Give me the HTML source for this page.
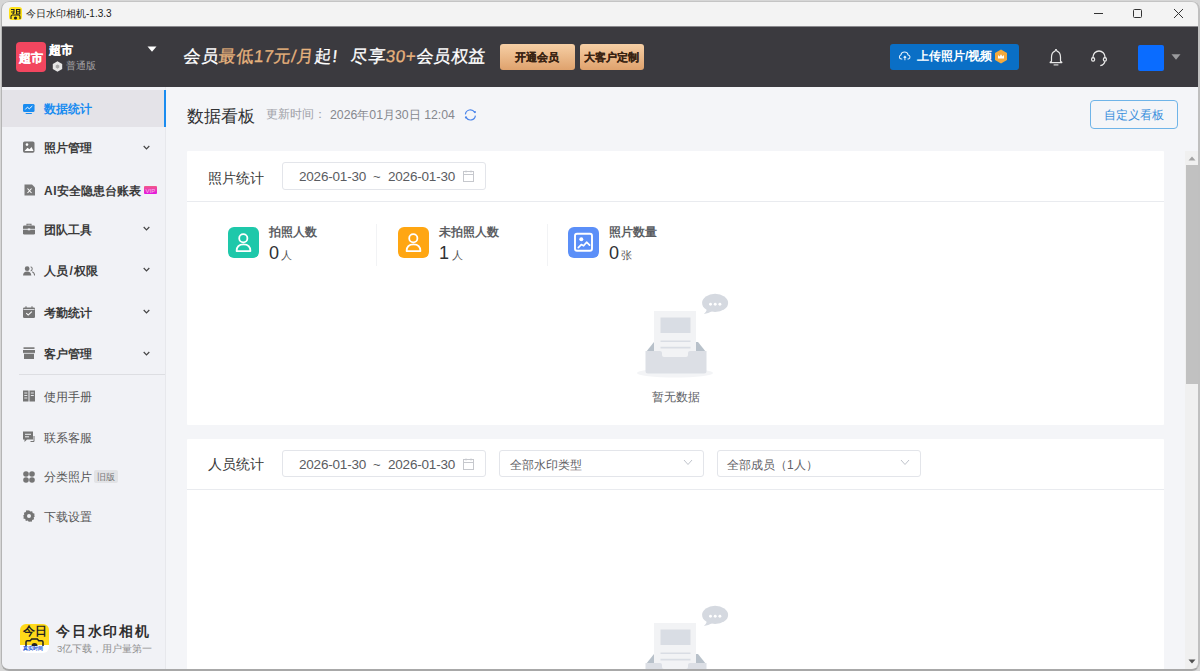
<!DOCTYPE html>
<html><head><meta charset="utf-8">
<style>
*{box-sizing:border-box;margin:0;padding:0}
html,body{width:1200px;height:671px;overflow:hidden;background:#f4f5f8;font-family:"Liberation Sans",sans-serif;position:relative}
.a{position:absolute}
.t{position:absolute;white-space:nowrap;line-height:1}
.frame{position:absolute;left:1px;top:1px;width:1199px;height:670px;border-style:solid;border-color:#c4c4c4 #c0c0c0 #a8a8a8 #b5b5b5;border-width:1px 2px 2px 1px;border-radius:8px;box-shadow:0 0 0 40px #d6d6d6;pointer-events:none;z-index:50}
.nav{position:absolute;left:44px;font-size:12px;font-weight:bold;color:#3a3a3a;line-height:1;white-space:nowrap}
.nav2{position:absolute;left:44px;font-size:12px;color:#555;line-height:1;white-space:nowrap}
.chev{position:absolute;left:143px;width:7px;height:5px}
.ico{position:absolute;left:23px;width:12px;height:12px}
.box{position:absolute;border:1px solid #e3e5ea;border-radius:3px;background:#fff}
</style></head><body>

<!-- title bar -->
<div class="a" style="left:0;top:0;width:1200px;height:26px;background:#f3f3f3"></div>
<div class="a" style="left:9px;top:7px;width:13px;height:13px;background:#ffe21a;border-radius:3px"></div>
<svg class="a" style="left:9px;top:7px" width="13" height="13" viewBox="0 0 13 13"><path d="M2 2.5h3v2.5H2M5 2.5v3.5L3.5 7M7.5 2.5h3.3v4.5H7.5zM7.5 4.8h3.3" stroke="#222" stroke-width="1.1" fill="none"/><path d="M2 12V9.5q0-1.5 1.5-1.5h6q1.5 0 1.5 1.5V12" stroke="#222" stroke-width="1.1" fill="none"/><circle cx="6.5" cy="11" r="1.6" fill="#222"/></svg>
<div class="t" style="left:26px;top:9px;font-size:10px;color:#1b1b1b">今日水印相机-1.3.3</div>
<div class="a" style="left:1094px;top:13px;width:9px;height:1px;background:#333"></div>
<div class="a" style="left:1133px;top:9px;width:9px;height:9px;border:1px solid #333;border-radius:1.5px"></div>
<svg class="a" style="left:1173px;top:8px" width="11" height="11" viewBox="0 0 11 11"><path d="M1 1L10 10M10 1L1 10" stroke="#333" stroke-width="1"/></svg>

<!-- header -->
<div class="a" style="left:0;top:26px;width:1200px;height:61px;background:#3b3a3f"></div>
<div class="a" style="left:0;top:26px;width:1200px;height:1px;background:#8a898d"></div>
<div class="a" style="left:16px;top:42px;width:30px;height:30px;background:#f2465f;border-radius:4px"></div>
<div class="t" style="left:19px;top:51.5px;font-size:12px;font-weight:bold;color:#fff;-webkit-text-stroke:0.3px #fff">超市</div>
<div class="t" style="left:49px;top:44px;font-size:12px;font-weight:bold;color:#fff;-webkit-text-stroke:0.3px #fff">超市</div>
<svg class="a" style="left:52px;top:61px" width="11" height="11" viewBox="0 0 11 11"><path d="M5.5 0.3L10.2 3v5L5.5 10.7 0.8 8V3z" fill="#e6e6e6"/><path d="M5.5 3.4l1.8 1.1v2.1l-1.8 1.1-1.8-1.1V4.5z" fill="#a8a8a8"/></svg>
<div class="t" style="left:66px;top:61px;font-size:10px;color:#a5a5a8">普通版</div>
<svg class="a" style="left:147px;top:46px" width="10" height="6" viewBox="0 0 10 6"><path d="M0.5 0.5h9L5 5.8z" fill="#fff"/></svg>

<div class="t" style="left:184px;top:48px;font-size:17px;color:#fff;letter-spacing:0.5px;transform:skewX(-6deg);-webkit-text-stroke:0.3px currentColor">会员<span style="color:#e6b27d">最低17元/月</span>起<span style="margin-left:1px;margin-right:13px">!</span>尽享<span style="color:#e6b27d">30+</span>会员权益</div>

<div class="a" style="left:500px;top:44px;width:75px;height:26px;border-radius:3px;background:linear-gradient(#f6cfa5,#dfa26d)"></div>
<div class="t" style="left:515px;top:52px;font-size:11px;font-weight:bold;color:#3a2312;-webkit-text-stroke:0.2px #3a2312">开通会员</div>
<div class="a" style="left:580px;top:44px;width:64px;height:26px;border-radius:3px;background:linear-gradient(#f6cfa5,#dfa26d)"></div>
<div class="t" style="left:584px;top:52px;font-size:11px;font-weight:bold;color:#3a2312;-webkit-text-stroke:0.2px #3a2312">大客户定制</div>

<div class="a" style="left:890px;top:44px;width:129px;height:26px;border-radius:3px;background:#0a6fc6"></div>
<svg class="a" style="left:898px;top:50px" width="14" height="11" viewBox="0 0 14 11"><path d="M3.9 9H3.3A2.1 2.1 0 0 1 2.9 4.9 3.7 3.7 0 0 1 10.1 4.9 2.1 2.1 0 0 1 10.5 9H9.9" stroke="#e6f0fa" stroke-width="1.05" fill="none" stroke-linecap="round"/><path d="M6.9 10.2V6.4M5.6 7.6l1.3-1.3 1.3 1.3" stroke="#e6f0fa" stroke-width="1.05" fill="none"/></svg>
<div class="t" style="left:917px;top:50px;font-size:12px;font-weight:bold;color:#fff">上传照片/视频</div>
<svg class="a" style="left:994px;top:49px" width="14" height="15" viewBox="0 0 14 15"><path d="M7 0.5L13 4v7l-6 3.5L1 11V4z" fill="#f4a93c"/><path d="M4 9.5V6l1.6 1.4L7 5.3l1.4 2.1L10 6v3.5z" fill="#fff"/></svg>

<svg class="a" style="left:1048px;top:48px" width="16" height="19" viewBox="0 0 16 19"><path d="M7.6 1.6Q8.6 1.6 9 3.1Q12.4 4.3 12.5 9V13.2L13.8 14.2Q14 14.7 13.4 14.7H2.6Q2 14.7 2.2 14.2L3.5 13.2V9Q3.6 4.3 7 3.1Q7.4 1.6 8.4 1.6Z" stroke="#e8e8e8" stroke-width="1.2" fill="none" stroke-linejoin="round"/><path d="M5.6 16.9h4.8" stroke="#d8d8d8" stroke-width="1.2"/></svg>
<svg class="a" style="left:1090px;top:49px" width="18" height="18" viewBox="0 0 18 18"><path d="M3 9.5V8a6 6 0 0 1 12 0v1.5" stroke="#e8e8e8" stroke-width="1.3" fill="none"/><rect x="1.6" y="8.6" width="3" height="3.6" rx="1.4" stroke="#e8e8e8" stroke-width="1.2" fill="none"/><rect x="13.4" y="8.6" width="3" height="3.6" rx="1.4" stroke="#e8e8e8" stroke-width="1.2" fill="none"/><path d="M14.9 12.4q-0.6 3.4-4.6 4.3" stroke="#e8e8e8" stroke-width="1.3" fill="none"/></svg>
<div class="a" style="left:1138px;top:45px;width:26px;height:26px;border-radius:2px;background:#0a6cff"></div>
<svg class="a" style="left:1171px;top:54px" width="10" height="6" viewBox="0 0 10 6"><path d="M0.5 0.3h9L5 5.8z" fill="#9b9b9e"/></svg>

<!-- sidebar -->
<div class="a" style="left:0;top:87px;width:165px;height:584px;background:#f1f2f6"></div>
<div class="a" style="left:165px;top:87px;width:1px;height:584px;background:#e7e8ec"></div>
<div class="a" style="left:2px;top:90px;width:162px;height:37px;background:#e4e3e8"></div>
<div class="a" style="left:164px;top:90px;width:2px;height:37px;background:#1a8cf0"></div>

<svg class="ico" style="top:103px" width="13" height="12" viewBox="0 0 13 12"><rect x="0" y="0.5" width="12.5" height="8.8" rx="1.5" fill="#1a8cf0"/><path d="M2.5 6.5L4.8 4l2 1.8 3.3-3" stroke="#fff" stroke-width="1" fill="none"/><path d="M2.5 10.3h7.5l-0.8 1H3.3z" fill="#1a8cf0"/></svg>
<div class="nav" style="top:103px;color:#1a8cf0">数据统计</div>

<svg class="ico" style="top:141px" width="12" height="12" viewBox="0 0 12 12"><rect x="0" y="0.5" width="11.5" height="11.2" rx="1.6" fill="#757575"/><circle cx="4" cy="3.6" r="1.3" fill="#fff"/><path d="M1.5 10l3-3.3 2 1.5 2-2.2 2 4z" fill="#fff"/></svg>
<div class="nav" style="top:142px">照片管理</div>
<svg class="chev" style="top:145px" viewBox="0 0 7 5"><path d="M0.7 1l2.8 2.8L6.3 1" stroke="#444" stroke-width="1.2" fill="none"/></svg>

<svg class="ico" style="top:184px;left:24px" width="11" height="12" viewBox="0 0 11 12"><path d="M0 0.5h7.5l3 3v8H0z" fill="#7a7a7a"/><path d="M3 4.5l4 4.5M7 4.5l-4 4.5" stroke="#fff" stroke-width="1.1"/></svg>
<div class="nav" style="top:185px"><span style="letter-spacing:0.7px">AI</span>安全隐患台账表</div>
<div class="a" style="left:144px;top:186px;width:13px;height:8px;background:linear-gradient(#f25a88,#e316e4);border-radius:1px"></div>
<div class="t" style="left:145.5px;top:187.5px;font-size:6px;color:#f7b8ee">VIP</div>

<svg class="ico" style="top:223px" width="12" height="12" viewBox="0 0 12 12"><path d="M4 2.5V1.2h4v1.3" stroke="#757575" stroke-width="1.1" fill="none"/><rect x="0" y="2.5" width="12" height="9" rx="1.3" fill="#757575"/><path d="M0 6.3h12" stroke="#f1f2f6" stroke-width="0.9"/><rect x="4.8" y="5.5" width="2.4" height="1.8" fill="#f1f2f6"/></svg>
<div class="nav" style="top:224px">团队工具</div>
<svg class="chev" style="top:226px" viewBox="0 0 7 5"><path d="M0.7 1l2.8 2.8L6.3 1" stroke="#444" stroke-width="1.2" fill="none"/></svg>

<svg class="ico" style="top:265px" width="13" height="11" viewBox="0 0 13 11"><circle cx="4.5" cy="3" r="2.6" fill="#757575"/><path d="M0 10.5q0.3-4.5 4.5-4.5t4.5 4.5z" fill="#757575"/><path d="M8.3 0.8a2.4 2.4 0 0 1 0 4.6M10 6.3q2.5 1 2.6 4" stroke="#757575" stroke-width="1.1" fill="none"/></svg>
<div class="nav" style="top:265px">人员<span style="margin:0 1.5px">/</span>权限</div>
<svg class="chev" style="top:267px" viewBox="0 0 7 5"><path d="M0.7 1l2.8 2.8L6.3 1" stroke="#444" stroke-width="1.2" fill="none"/></svg>

<svg class="ico" style="top:306px" width="12" height="12" viewBox="0 0 12 12"><path d="M3 0.3v2.2M9 0.3v2.2" stroke="#757575" stroke-width="1.1"/><rect x="0" y="1.5" width="12" height="10.5" rx="1.3" fill="#757575"/><path d="M0.5 3.5h11" stroke="#f1f2f6" stroke-width="0.8"/><path d="M3.3 7.2l1.9 1.9 3.6-3.5" stroke="#fff" stroke-width="1.1" fill="none"/></svg>
<div class="nav" style="top:307px">考勤统计</div>
<svg class="chev" style="top:309px" viewBox="0 0 7 5"><path d="M0.7 1l2.8 2.8L6.3 1" stroke="#444" stroke-width="1.2" fill="none"/></svg>

<svg class="ico" style="top:347px" width="12" height="12" viewBox="0 0 12 12"><rect x="0.5" y="0.3" width="11" height="1.6" fill="#757575"/><path d="M0 3h12v3.2H0z" fill="#757575"/><path d="M1 6.5h10V12H1z" fill="#757575"/><path d="M0 6.3h12" stroke="#f1f2f6" stroke-width="0.6"/></svg>
<div class="nav" style="top:348px">客户管理</div>
<svg class="chev" style="top:351px" viewBox="0 0 7 5"><path d="M0.7 1l2.8 2.8L6.3 1" stroke="#444" stroke-width="1.2" fill="none"/></svg>

<div class="a" style="left:19px;top:374px;width:146px;height:1px;background:#dddee2"></div>

<svg class="ico" style="top:390px" width="12" height="12" viewBox="0 0 12 12"><path d="M0 0.5h5.5v11H0zM6.5 0.5H12v11H6.5z" fill="#757575"/><path d="M1.3 3h3M1.3 5.5h3M1.3 8h3M7.8 3h3M7.8 5.5h3" stroke="#f1f2f6" stroke-width="0.9"/></svg>
<div class="nav2" style="top:391px">使用手册</div>
<svg class="ico" style="top:431px" width="12" height="12" viewBox="0 0 12 12"><path d="M0 0.5h10v8H4l-2.5 2.5V8.5H0z" fill="#757575"/><path d="M2 3.3h6M2 5.8h4" stroke="#f1f2f6" stroke-width="1"/><path d="M11 5v5.5H7.5" stroke="#757575" stroke-width="1" fill="none"/></svg>
<div class="nav2" style="top:432px">联系客服</div>
<svg class="ico" style="top:471px" width="12" height="12" viewBox="0 0 12 12"><circle cx="3" cy="3" r="2.8" fill="#757575"/><circle cx="9" cy="3" r="2.8" fill="#757575"/><circle cx="3" cy="9" r="2.8" fill="#757575"/><circle cx="9" cy="9" r="2.8" fill="#757575"/></svg>
<div class="nav2" style="top:471px">分类照片</div>
<div class="a" style="left:94px;top:470px;width:24px;height:13px;background:#e2e3e6;border-radius:2px"></div>
<div class="t" style="left:97px;top:473px;font-size:8.5px;color:#777">旧版</div>
<svg class="ico" style="top:510px" width="12" height="12" viewBox="0 0 12 12"><path d="M6 0.2l1.3 1.4 1.9-0.4 0.5 1.9 1.9 0.6-0.4 1.9L12 6l-1.3 1.4 0.4 1.9-1.9 0.6-0.5 1.9-1.9-0.4L6 12l-1.3-1.4-1.9 0.4-0.5-1.9-1.9-0.6 0.4-1.9L0 6l1.3-1.4-0.4-1.9 1.9-0.6 0.5-1.9 1.9 0.4z" fill="#757575"/><circle cx="6" cy="6" r="2" fill="#f1f2f6"/></svg>
<div class="nav2" style="top:511px">下载设置</div>

<!-- bottom logo -->
<div class="a" style="left:20px;top:624px;width:29px;height:29px;border-radius:6px;background:linear-gradient(#ffd91a 0,#ffd91a 72%,#fff 72%)"></div>
<div class="t" style="left:23px;top:626px;font-size:11.5px;font-weight:bold;color:#222">今日</div>
<svg class="a" style="left:25px;top:638px" width="19" height="8" viewBox="0 0 19 8"><path d="M1 8V4q0-1.3 1.3-1.3h3l1.4-1.8h5.6l1.4 1.8h3Q18 2.7 18 4v4" stroke="#222" stroke-width="1.5" fill="none"/><path d="M6.5 8a3 3 0 0 1 6 0z" fill="#222"/></svg>
<div class="t" style="left:23px;top:646px;font-size:5px;font-weight:bold;color:#1e58d6">真实时间</div>
<div class="t" style="left:56px;top:625px;font-size:13.5px;font-weight:bold;color:#2e2e2e;letter-spacing:1.8px">今日水印相机</div>
<div class="t" style="left:57px;top:644px;font-size:9.5px;color:#909090">3亿下载，用户量第一</div>

<!-- main -->
<div class="t" style="left:187px;top:108px;font-size:17px;color:#303133">数据看板</div>
<div class="t" style="left:266px;top:109px;font-size:11.5px;color:#a0a2a8">更新时间：</div>
<div class="t" style="left:330px;top:109px;font-size:12.3px;color:#86888e">2026年01月30日 12:04</div>
<svg class="a" style="left:464px;top:109px" width="13" height="12" viewBox="0 0 13 12"><path d="M11.4 6.6A5 5 0 0 1 2.2 8.6M1.4 5.4A5 5 0 0 1 10.6 3.2" stroke="#4d86ea" stroke-width="1.2" fill="none"/><circle cx="10.9" cy="3.1" r="1.1" fill="#4d86ea"/><circle cx="2" cy="8.4" r="1.1" fill="#4d86ea"/></svg>
<div class="a" style="left:1090px;top:100px;width:88px;height:29px;border:1px solid #6fb4e8;border-radius:4px"></div>
<div class="t" style="left:1104px;top:109px;font-size:12.2px;color:#3a8fdc">自定义看板</div>

<!-- card 1 -->
<div class="a" style="left:187px;top:151px;width:977px;height:274px;background:#fff;border-radius:1px"></div>
<div class="a" style="left:187px;top:201px;width:977px;height:1px;background:#e9ebef"></div>
<div class="t" style="left:208px;top:172px;font-size:13.5px;color:#3a3a3a">照片统计</div>
<div class="box" style="left:282px;top:162px;width:204px;height:28px"></div>
<div class="t" style="left:299px;top:170px;font-size:13.5px;color:#5a5c61;letter-spacing:-0.2px">2026-01-30</div>
<div class="t" style="left:373px;top:170px;font-size:13px;color:#5a5c61">~</div>
<div class="t" style="left:388px;top:170px;font-size:13.5px;color:#5a5c61;letter-spacing:-0.2px">2026-01-30</div>
<svg class="a" style="left:462px;top:170px" width="13" height="12" viewBox="0 0 13 12"><rect x="1.5" y="1.5" width="10" height="10" stroke="#c6c8cd" stroke-width="1" fill="none"/><path d="M1.5 4.5h10M4 0.5v2M9 0.5v2" stroke="#c6c8cd" stroke-width="1"/></svg>

<div class="a" style="left:228px;top:227px;width:31px;height:31px;border-radius:6px;background:#1ec8aa"></div>
<svg class="a" style="left:228px;top:227px" width="31" height="31" viewBox="0 0 31 31"><circle cx="15.3" cy="11.2" r="4.1" stroke="#fff" stroke-width="1.8" fill="none"/><path d="M8.6 24.1C8.6 19.6 11.5 17.4 15.5 17.4S22.4 19.6 22.4 24.1Z" stroke="#fff" stroke-width="1.8" fill="none" stroke-linejoin="round"/></svg>
<div class="t" style="left:269px;top:226px;font-size:12px;font-weight:bold;color:#5b5d62">拍照人数</div>
<div class="t" style="left:269px;top:244px;font-size:18px;color:#303133">0<span style="font-size:11px;color:#555;margin-left:2px">人</span></div>
<div class="a" style="left:376px;top:224px;width:1px;height:42px;background:#f2f3f5"></div>

<div class="a" style="left:398px;top:227px;width:31px;height:31px;border-radius:6px;background:#ffa612"></div>
<svg class="a" style="left:398px;top:227px" width="31" height="31" viewBox="0 0 31 31"><circle cx="15.3" cy="11.2" r="4.1" stroke="#fff" stroke-width="1.8" fill="none"/><path d="M8.6 24.1C8.6 19.6 11.5 17.4 15.5 17.4S22.4 19.6 22.4 24.1Z" stroke="#fff" stroke-width="1.8" fill="none" stroke-linejoin="round"/></svg>
<div class="t" style="left:439px;top:226px;font-size:12px;font-weight:bold;color:#5b5d62">未拍照人数</div>
<div class="t" style="left:439px;top:244px;font-size:18px;color:#303133">1<span style="font-size:11px;color:#555;margin-left:3px">人</span></div>
<div class="a" style="left:547px;top:224px;width:1px;height:42px;background:#f2f3f5"></div>

<div class="a" style="left:568px;top:227px;width:31px;height:31px;border-radius:6px;background:#5b8ff8"></div>
<svg class="a" style="left:568px;top:227px" width="31" height="31" viewBox="0 0 31 31"><rect x="7" y="6.8" width="17" height="17" rx="2" stroke="#fff" stroke-width="1.9" fill="none"/><circle cx="13.3" cy="12.3" r="2" fill="#fff"/><path d="M10.3 20.6L13.3 17.6 15.6 18.8 18.6 15.2 21.6 18.2" stroke="#fff" stroke-width="1.7" fill="none" stroke-linecap="round" stroke-linejoin="round"/></svg>
<div class="t" style="left:609px;top:226px;font-size:12px;font-weight:bold;color:#5b5d62">照片数量</div>
<div class="t" style="left:609px;top:244px;font-size:18px;color:#303133">0<span style="font-size:11px;color:#555;margin-left:2px">张</span></div>

<!-- empty 1 -->
<svg class="a" style="left:630px;top:290px" width="110" height="92" viewBox="0 0 110 92">
<ellipse cx="45" cy="83" rx="38" ry="4.5" fill="#f3f4f6"/>
<path d="M16 62l8-10h44l8 10z" fill="#b8c1ca"/>
<rect x="24" y="21" width="42" height="46" fill="#f2f3f5"/>
<rect x="30.5" y="27.5" width="30" height="15.5" fill="#d9dde4"/>
<path d="M30.5 51.2h30M30.5 57.6h30" stroke="#d9dde4" stroke-width="1.6"/>
<path d="M15.5 61h14.5q2 0 2 2v2q0 2 2 2h22q2 0 2-2v-2q0-2 2-2h16.5v20q0 2.5-2.5 2.5h-56q-2.5 0-2.5-2.5z" fill="#dcdfe5"/>
<ellipse cx="85.1" cy="12.9" rx="13" ry="9.1" fill="#d5d9e0"/>
<path d="M77 19.2Q76 22.3 73.9 24Q78.5 23.2 82 21.3z" fill="#d5d9e0"/>
<circle cx="80.5" cy="14.3" r="1.45" fill="#fff"/><circle cx="85.2" cy="14.3" r="1.45" fill="#fff"/><circle cx="89.9" cy="14.3" r="1.45" fill="#fff"/>
</svg>
<div class="t" style="left:652px;top:391px;font-size:12px;color:#606266">暂无数据</div>

<!-- card 2 -->
<div class="a" style="left:187px;top:439px;width:977px;height:240px;background:#fff;border-radius:1px"></div>
<div class="a" style="left:187px;top:489px;width:977px;height:1px;background:#e9ebef"></div>
<div class="t" style="left:208px;top:458px;font-size:13.5px;color:#3a3a3a">人员统计</div>
<div class="box" style="left:282px;top:450px;width:204px;height:27px"></div>
<div class="t" style="left:299px;top:458px;font-size:13.5px;color:#5a5c61;letter-spacing:-0.2px">2026-01-30</div>
<div class="t" style="left:373px;top:458px;font-size:13px;color:#5a5c61">~</div>
<div class="t" style="left:388px;top:458px;font-size:13.5px;color:#5a5c61;letter-spacing:-0.2px">2026-01-30</div>
<svg class="a" style="left:462px;top:458px" width="13" height="12" viewBox="0 0 13 12"><rect x="1.5" y="1.5" width="10" height="10" stroke="#c6c8cd" stroke-width="1" fill="none"/><path d="M1.5 4.5h10M4 0.5v2M9 0.5v2" stroke="#c6c8cd" stroke-width="1"/></svg>
<div class="box" style="left:499px;top:450px;width:205px;height:27px"></div>
<div class="t" style="left:510px;top:459px;font-size:12px;color:#5f6166">全部水印类型</div>
<svg class="a" style="left:683px;top:459px" width="10" height="7" viewBox="0 0 10 7"><path d="M1 1l4 4.5L9 1" stroke="#c0c4cc" stroke-width="1" fill="none"/></svg>
<div class="box" style="left:717px;top:450px;width:204px;height:27px"></div>
<div class="t" style="left:727px;top:459px;font-size:12px;color:#5f6166">全部成员（1人）</div>
<svg class="a" style="left:900px;top:459px" width="10" height="7" viewBox="0 0 10 7"><path d="M1 1l4 4.5L9 1" stroke="#c0c4cc" stroke-width="1" fill="none"/></svg>

<!-- empty 2 -->
<svg class="a" style="left:630px;top:602px" width="110" height="92" viewBox="0 0 110 92">
<ellipse cx="45" cy="83" rx="38" ry="4.5" fill="#f3f4f6"/>
<path d="M16 62l8-10h44l8 10z" fill="#b8c1ca"/>
<rect x="24" y="21" width="42" height="46" fill="#f2f3f5"/>
<rect x="30.5" y="27.5" width="30" height="15.5" fill="#d9dde4"/>
<path d="M30.5 51.2h30M30.5 57.6h30" stroke="#d9dde4" stroke-width="1.6"/>
<path d="M15.5 61h14.5q2 0 2 2v2q0 2 2 2h22q2 0 2-2v-2q0-2 2-2h16.5v20q0 2.5-2.5 2.5h-56q-2.5 0-2.5-2.5z" fill="#dcdfe5"/>
<ellipse cx="85.1" cy="12.9" rx="13" ry="9.1" fill="#d5d9e0"/>
<path d="M77 19.2Q76 22.3 73.9 24Q78.5 23.2 82 21.3z" fill="#d5d9e0"/>
<circle cx="80.5" cy="14.3" r="1.45" fill="#fff"/><circle cx="85.2" cy="14.3" r="1.45" fill="#fff"/><circle cx="89.9" cy="14.3" r="1.45" fill="#fff"/>
</svg>

<!-- scrollbar -->
<div class="a" style="left:1185px;top:151px;width:14px;height:520px;background:#f0f0f0"></div>
<svg class="a" style="left:1188px;top:156px" width="8" height="5" viewBox="0 0 8 5"><path d="M0.5 4.5L4 0.5l3.5 4z" fill="#a3a3a3"/></svg>
<div class="a" style="left:1186px;top:165px;width:12px;height:219px;background:#c1c1c1"></div>
<svg class="a" style="left:1188px;top:659px" width="8" height="5" viewBox="0 0 8 5"><path d="M0.5 0.5h7L4 4.5z" fill="#505050"/></svg>

<div class="frame"></div>
</body></html>
